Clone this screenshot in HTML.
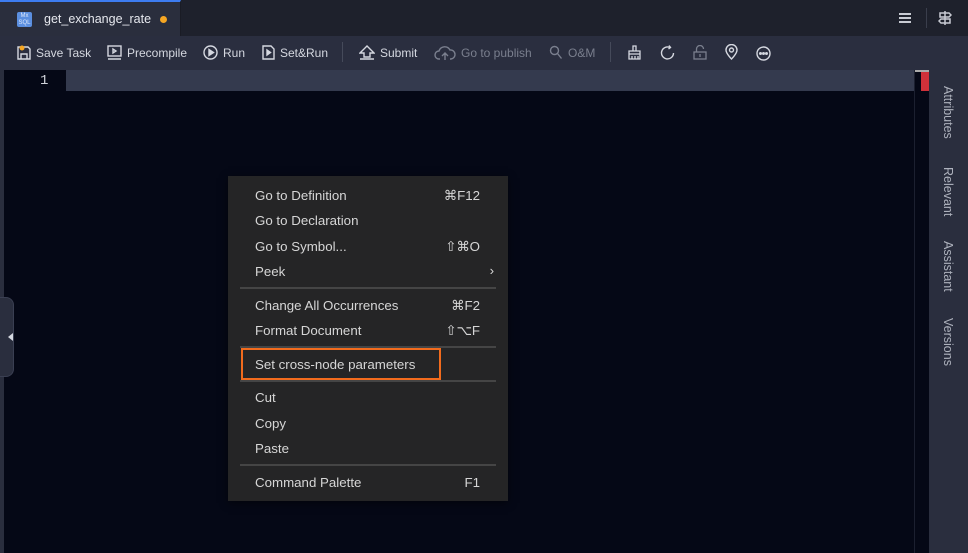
<!DOCTYPE html>
<html><head><style>
*{margin:0;padding:0;box-sizing:border-box}
body{width:968px;height:553px;overflow:hidden;background:#050816;font-family:"Liberation Sans",sans-serif;position:relative}
.a{position:absolute}
.tb{color:#d5d8e0;font-size:12px;display:flex;align-items:center;gap:5px}
.dis{color:#7a7f8e}
.mi{position:absolute;left:255px;color:#d6d6d6;font-size:13.3px}
.ks{position:absolute;right:488px;color:#d6d6d6;font-size:13.3px}
.sep{position:absolute;left:240px;width:256px;height:2px;background:#454545}
.vt{position:absolute;left:941px;color:#aeb2bd;font-size:12.5px;writing-mode:vertical-rl}
</style></head><body>
<div class="a" style="left:0;top:0;width:968px;height:36px;background:#1e212c"></div>
<div class="a" style="left:0;top:0;width:181px;height:36px;background:#2a2e3d;border-top:2px solid #3d7cf0;border-right:1px solid #1a1c25"></div>
<div class="a" style="left:17px;top:12px;width:15px;height:15px;background:#5b8fe0;border-radius:2px;color:#dbe6fa;font-size:6px;line-height:6.5px;text-align:center;padding-top:1px">Mx<br>SQL</div>
<div class="a" style="left:44px;top:12px;color:#e6e8ee;font-size:12.5px">get_exchange_rate</div>
<div class="a" style="left:160px;top:16px;width:7px;height:7px;border-radius:50%;background:#f5a623"></div>
<div class="a" style="left:899px;top:13px;width:12px;height:2px;background:#c8cbd3;box-shadow:0 4px 0 #c8cbd3,0 8px 0 #c8cbd3"></div>
<div class="a" style="left:926px;top:8px;width:1px;height:20px;background:#3a3e4c"></div>
<svg class="a" style="left:938px;top:10px" width="14" height="16" viewBox="0 0 14 16" fill="none" stroke="#c8cbd3" stroke-width="1.5"><path d="M7 1v14M2 3h9l2 2-2 2H2zM12 9H3l-2 2 2 2h9z"/></svg>
<div class="a" style="left:0;top:36px;width:968px;height:34px;background:#2a2e3f"></div>
<div class="a tb" style="left:17px;top:45px"><svg width="14" height="15" viewBox="0 0 14 15" fill="none" stroke="#d5d8e0" stroke-width="1.4"><path d="M1 2h10l2 2v10H1z M4 14v-5h6v5"/><circle cx="5" cy="3" r="2.5" fill="#f5a623" stroke="none"/></svg>Save Task</div>
<div class="a tb" style="left:107px;top:45px"><svg width="15" height="15" viewBox="0 0 15 15" fill="none" stroke="#d5d8e0" stroke-width="1.4"><rect x="1" y="1" width="13" height="10"/><path d="M6 4v4l3-2zM1 14h13"/></svg>Precompile</div>
<div class="a tb" style="left:203px;top:45px"><svg width="15" height="15" viewBox="0 0 15 15" fill="none" stroke="#d5d8e0" stroke-width="1.4"><circle cx="7.5" cy="7.5" r="6.5"/><path d="M6 4.5v6l4.5-3z" fill="#d5d8e0"/></svg>Run</div>
<div class="a tb" style="left:262px;top:45px"><svg width="13" height="15" viewBox="0 0 13 15" fill="none" stroke="#d5d8e0" stroke-width="1.4"><path d="M1 1h8l3 3v10H1z"/><path d="M5 5v5l3.5-2.5z" fill="#d5d8e0"/></svg>Set&amp;Run</div>
<div class="a" style="left:342px;top:42px;width:1px;height:20px;background:#454a5a"></div>
<div class="a tb" style="left:359px;top:45px"><svg width="16" height="15" viewBox="0 0 16 15" fill="none" stroke="#d5d8e0" stroke-width="1.4"><path d="M8 1L1 8h4v4h6V8h4zM1 14h14"/></svg>Submit</div>
<div class="a tb dis" style="left:434px;top:45px"><svg width="22" height="16" viewBox="0 0 22 16" fill="none" stroke="#7a7f8e" stroke-width="1.4"><path d="M6 14H5a4 4 0 010-8 6 6 0 0111-1 4 4 0 011 9h-1M11 15V8M8 11l3-3 3 3"/></svg>Go to publish</div>
<div class="a tb dis" style="left:549px;top:45px"><svg width="14" height="15" viewBox="0 0 14 15" fill="none" stroke="#7a7f8e" stroke-width="1.4"><circle cx="5.5" cy="5.5" r="4"/><path d="M8.5 8.5l4 5"/></svg>O&amp;M</div>
<div class="a" style="left:610px;top:42px;width:1px;height:20px;background:#454a5a"></div>
<svg class="a" style="left:627px;top:45px" width="15" height="15" viewBox="0 0 15 15" fill="none" stroke="#d5d8e0" stroke-width="1.3"><path d="M6 1h3v5H6zM2 6h11v3H2zM2 9v5h11V9M5 11v3M8 11v3M11 11v3"/></svg>
<svg class="a" style="left:660px;top:45px" width="15" height="15" viewBox="0 0 15 15" fill="none" stroke="#d5d8e0" stroke-width="1.4"><path d="M10 2.5A6 6 0 1013.5 8M9 0.5l1.5 2-2 1.5"/></svg>
<svg class="a" style="left:693px;top:45px" width="14" height="15" viewBox="0 0 14 15" fill="none" stroke="#7a7f8e" stroke-width="1.3"><rect x="1" y="7" width="12" height="7"/><path d="M3.5 7V4a3.5 3.5 0 017 0M7 9v3"/></svg>
<svg class="a" style="left:725px;top:44px" width="13" height="16" viewBox="0 0 13 16" fill="none" stroke="#d5d8e0" stroke-width="1.4"><path d="M6.5 15S1 9.5 1 6a5.5 5.5 0 0111 0c0 3.5-5.5 9-5.5 9z"/><circle cx="6.5" cy="6" r="2"/></svg>
<svg class="a" style="left:756px;top:46px" width="15" height="15" viewBox="0 0 15 15" fill="none" stroke="#d5d8e0" stroke-width="1.4"><circle cx="7.5" cy="7.5" r="6.5"/><circle cx="4.5" cy="7.5" r=".8" fill="#d5d8e0"/><circle cx="7.5" cy="7.5" r=".8" fill="#d5d8e0"/><circle cx="10.5" cy="7.5" r=".8" fill="#d5d8e0"/></svg>
<div class="a" style="left:0;top:70px;width:4px;height:483px;background:#2a2e3e"></div>
<div class="a" style="left:66px;top:70px;width:849px;height:21px;background:#343a4e"></div>
<div class="a" style="left:40px;top:73px;color:#d0d3da;font-family:'Liberation Mono',monospace;font-size:14px">1</div>
<div class="a" style="left:914px;top:70px;width:1px;height:483px;background:#1c2030"></div>
<div class="a" style="left:921px;top:70px;width:8px;height:21px;background:#d0313a"></div>
<div class="a" style="left:915px;top:70px;width:14px;height:2px;background:#aaa"></div>
<div class="a" style="left:929px;top:70px;width:39px;height:483px;background:#2a2e3e"></div>
<div class="vt" style="top:86px">Attributes</div>
<div class="vt" style="top:167px">Relevant</div>
<div class="vt" style="top:241px">Assistant</div>
<div class="vt" style="top:318px">Versions</div>
<div class="a" style="left:0;top:297px;width:14px;height:80px;background:#2a2e3e;border:1px solid #3a3f52;border-left:none;border-radius:0 8px 8px 0"></div>
<div class="a" style="left:8px;top:333px;width:0;height:0;border:4px solid transparent;border-right:5px solid #d5d8e0;border-left:none"></div>
<div class="a" style="left:228px;top:176px;width:280px;height:325px;background:#252526;box-shadow:0 2px 8px rgba(0,0,0,.5)"></div>
<div class="mi" style="top:188px">Go to Definition</div><div class="ks" style="top:188px">⌘F12</div>
<div class="mi" style="top:213px">Go to Declaration</div>
<div class="mi" style="top:239px">Go to Symbol...</div><div class="ks" style="top:239px">⇧⌘O</div>
<div class="mi" style="top:264px">Peek</div><div class="ks" style="top:263px;right:474px">›</div>
<div class="sep" style="top:287px"></div>
<div class="mi" style="top:298px">Change All Occurrences</div><div class="ks" style="top:298px">⌘F2</div>
<div class="mi" style="top:323px">Format Document</div><div class="ks" style="top:323px">⇧⌥F</div>
<div class="sep" style="top:346px"></div>
<div class="a" style="left:241px;top:348px;width:200px;height:32px;border:2px solid #f26b1d"></div>
<div class="mi" style="top:357px">Set cross-node parameters</div>
<div class="sep" style="top:380px"></div>
<div class="mi" style="top:390px">Cut</div>
<div class="mi" style="top:416px">Copy</div>
<div class="mi" style="top:441px">Paste</div>
<div class="sep" style="top:464px"></div>
<div class="mi" style="top:475px">Command Palette</div><div class="ks" style="top:475px">F1</div>
</body></html>
